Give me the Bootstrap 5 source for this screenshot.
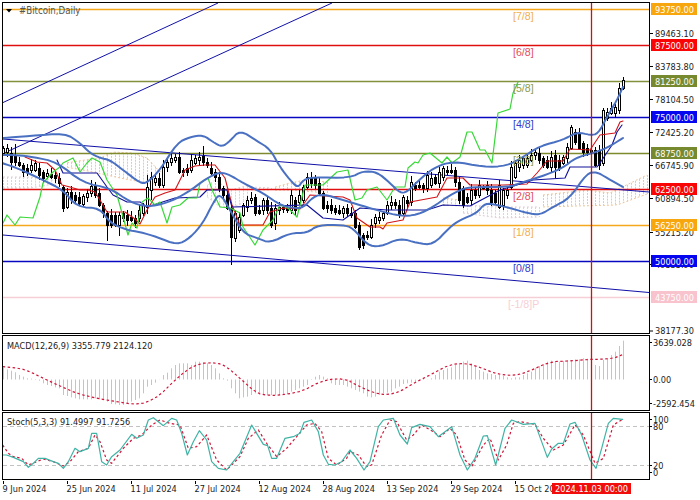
<!doctype html>
<html lang="en">
<head>
<meta charset="utf-8">
<title>#Bitcoin, Daily</title>
<link rel="stylesheet" href="https://cdn.jsdelivr.net/npm/bootstrap@5.3.0/dist/css/bootstrap.min.css">
<style>
html,body{margin:0;background:#fff;width:700px;height:500px;overflow:hidden}
.term-shell{padding:2px 0 0 2px;width:700px;height:500px;gap:1px}
.term-plot{width:648px;border:1px solid #000;background:#fff;flex:none;overflow:hidden}
.term-axis{width:50px;flex:none}
.h-main{height:332px}.h-macd{height:76px}.h-stoch{height:68px}
.term-plot svg,.term-axis svg,.term-dates svg{display:block}
.term-axis svg{overflow:visible}
.term-dates{height:19px}
svg text{font-family:"DejaVu Sans Condensed","Liberation Sans",sans-serif;font-size:9.1px;fill:#1a1a1a}
svg text.lvl{font-family:"Liberation Sans",sans-serif;font-size:10.6px}
svg text.ttl{fill:#555;font-size:9.6px}
svg text.onbox{fill:#fff;font-size:9.1px}
</style>
</head>
<body>
<div class="term-shell d-flex flex-column">
  <div class="d-flex h-main">
    <div class="term-plot"><svg id="p1" width="646" height="330" viewBox="3 3 646 330"></svg></div>
    <div class="term-axis"><svg id="a1" width="50" height="332" viewBox="650 2 50 332"></svg></div>
  </div>
  <div class="d-flex h-macd">
    <div class="term-plot"><svg id="p2" width="646" height="74" viewBox="3 336 646 74"></svg></div>
    <div class="term-axis"><svg id="a2" width="50" height="76" viewBox="650 335 50 76"></svg></div>
  </div>
  <div class="d-flex h-stoch">
    <div class="term-plot"><svg id="p3" width="646" height="66" viewBox="3 413 646 66"></svg></div>
    <div class="term-axis"><svg id="a3" width="50" height="68" viewBox="650 412 50 68"></svg></div>
  </div>
  <div class="term-dates"><svg id="dx" width="698" height="19" viewBox="2 481 698 19"></svg></div>
</div>
<script src="https://cdn.jsdelivr.net/npm/bootstrap@5.3.0/dist/js/bootstrap.bundle.min.js"></script>
<script>
const NS='http://www.w3.org/2000/svg';
function el(svg,tag,attrs,txt){const e=document.createElementNS(NS,tag);for(const k in attrs)e.setAttribute(k,attrs[k]);if(txt!=null)e.textContent=txt;document.getElementById(svg).appendChild(e);return e;}
function chaikin(p,n){for(let k=0;k<n;k++){const q=[p[0]];for(let i=0;i<p.length-1;i++){const a=p[i],b=p[i+1];q.push([a[0]*.75+b[0]*.25,a[1]*.75+b[1]*.25],[a[0]*.25+b[0]*.75,a[1]*.25+b[1]*.75]);}q.push(p[p.length-1]);p=q;}return p;}
function poly(svg,pts,color,w,dash){const a={points:pts.map(p=>p[0].toFixed(2)+','+p[1].toFixed(2)).join(' '),fill:'none',stroke:color,'stroke-width':w,'stroke-linejoin':'round','stroke-linecap':dash?'butt':'round'};if(dash)a['stroke-dasharray']=dash;el(svg,'polyline',a);}
function hl(svg,x1,x2,y,c,w,d){const a={x1,x2,y1:y,y2:y,stroke:c,'stroke-width':w||1};if(d)a['stroke-dasharray']=d;el(svg,'line',a);}
function vl(svg,x,y1,y2,c,w,d){const a={x1:x,x2:x,y1,y2,stroke:c,'stroke-width':w||1};if(d)a['stroke-dasharray']=d;el(svg,'line',a);}
function interp(p,x){if(x<=p[0][0])return p[0][1];for(let i=1;i<p.length;i++){if(x<=p[i][0]){const t=(x-p[i-1][0])/(p[i][0]-p[i-1][0]);return p[i-1][1]+t*(p[i][1]-p[i-1][1]);}}return p[p.length-1][1];}

/* ichimoku cloud */
const ORG='#eec7a0',PNK='#e2d0d4';
const clouds=[
 [PNK,3,60,[[3,177],[30,177],[60,181]],[[3,188],[30,188],[60,183]]],
 [ORG,66,163,[[66,163],[85,160],[100,158],[113,152],[133,153],[147,158],[160,172]],[[66,167],[93,172],[120,178],[147,183],[163,185]]],
 [PNK,205,250,[[205,187],[215,180],[230,190],[250,185]],[[205,195],[220,207],[240,205],[250,195]]],
 [PNK,250,272,[[250,187],[272,188]],[[250,190],[272,190]]],
 [ORG,272,328,[[272,188],[290,183],[305,180],[327,182]],[[272,190],[290,190],[327,193]]],
 [ORG,443,462,[[443,198],[460,200]],[[443,205],[460,206]]],
 [PNK,463,540,[[463,205],[500,207],[540,207]],[[463,213],[500,218],[540,217]]],
 [ORG,540,647,[[543,195],[587,190],[610,193],[647,175]],[[540,207],[577,206],[617,205],[647,194]]]
];
clouds.forEach(c=>{const xs=[];for(let x=3;x<=c[2];x+=4){if(x<c[1])continue;xs.push(x);vl('p1',x+.5,interp(c[3],x),interp(c[4],x),c[0],1,'2 1');}
 poly('p1',xs.map(x=>[x,interp(c[3],x)]),c[0],1,'2 2');poly('p1',xs.map(x=>[x,interp(c[4],x)]),c[0],1,'2 2');});

/* murrey levels */
const LV=[[9,'#f5a81c','93750.00','#f7a60e','[7/8]'],[45,'#e01010','87500.00','#fa0505','[6/8]'],[81,'#84913c','81250.00','#76892f','[5/8]'],[117,'#0808c0','75000.00','#0505f0','[4/8]'],[153,'#7e8a2c','68750.00','#76892f','[3/8]'],[189,'#e01010','62500.00','#fa0505','[2/8]'],[225,'#f5a81c','56250.00','#f7a60e','[1/8]'],[261,'#0808c0','50000.00','#0505f0','[0/8]'],[297,'#f6cfd6','43750.00','#f8c3cd','[-1/8]P']];
const lvlCol={'[7/8]':'#f0b050','[6/8]':'#e0505a','[5/8]':'#8c9a50','[4/8]':'#3040c8','[3/8]':'#8c9a50','[2/8]':'#e0505a','[1/8]':'#f0b050','[0/8]':'#3040c8','[-1/8]P':'#f6cfd6'};
LV.forEach(l=>{hl('p1',3,649,l[0]+.5,l[1],1.3);});

/* channels */
[[2,103,218,3],[2,154,332,3],[3,139,649,192],[3,235,649,292.5]].forEach(s=>el('p1','line',{x1:s[0],y1:s[1],x2:s[2],y2:s[3],stroke:'#1010a8','stroke-width':1}));

/* candles: x top bottom black */
const CD="3 148 153 0,7 148 152 0,11 153 162 1,15 155 162 1,19 162 165 1,23 165 172 1,27 168 172 1,31 165 170 0,35 163 170 0,39 168 175 1,43 172 178 1,47 173 176 0,51 174 177 1,55 175 178 1,59 178 183 1,63 187 208 1,67 192 207 0,71 192 199 1,75 195 200 1,79 197 203 1,83 196 204 0,87 193 197 0,91 186 193 0,95 185 195 1,99 193 205 1,103 205 213 1,107 213 225 1,111 215 225 1,115 215 225 1,119 215 225 0,123 213 218 1,127 215 220 1,131 217 220 1,135 218 223 1,139 210 218 0,143 205 213 0,147 187 207 0,151 177 190 0,155 178 182 0,159 178 185 1,163 167 185 0,167 162 167 0,171 158 162 0,175 157 160 0,179 157 172 1,183 170 172 1,187 168 172 1,191 160 170 0,195 158 163 0,199 157 160 0,203 156 162 1,207 162 165 1,211 168 173 1,215 172 177 1,219 177 188 1,223 188 195 1,227 195 208 1,231 208 237 1,235 213 238 0,239 217 230 0,243 205 215 0,247 200 207 0,251 198 200 0,255 197 213 1,259 210 213 1,263 200 210 0,267 200 210 1,271 208 225 1,275 208 223 0,279 207 210 0,283 207 209 1,287 208 210 1,291 195 210 0,295 200 210 1,299 195 202 0,303 187 200 0,307 177 187 0,311 178 183 1,315 178 185 1,319 183 193 1,323 193 208 1,327 205 208 1,331 205 210 1,335 208 212 1,339 210 213 1,343 208 213 0,347 208 213 1,351 213 215 1,355 213 227 1,359 225 247 1,363 235 245 1,367 235 237 1,371 225 237 0,375 217 223 0,379 217 220 0,383 213 218 0,387 205 213 0,391 202 205 0,395 202 205 1,399 205 215 1,403 197 213 0,407 200 203 1,411 182 202 0,415 185 188 1,419 185 187 1,423 185 188 1,427 175 188 0,431 178 185 0,435 177 183 1,439 172 183 0,443 168 177 0,447 170 172 1,451 170 172 1,455 170 182 1,459 182 200 1,463 188 205 1,467 197 202 1,471 190 200 0,475 190 195 1,479 185 195 0,483 187 188 1,487 185 190 1,491 190 202 1,495 193 202 1,499 185 207 0,503 190 205 0,507 190 195 0,511 167 187 0,515 163 177 0,519 160 167 0,523 158 165 0,527 158 165 0,531 155 160 0,535 152 155 0,539 153 160 1,543 158 165 1,547 160 167 1,551 157 167 0,555 155 167 1,559 160 168 1,563 157 163 0,567 147 158 0,571 127 148 0,575 132 142 1,579 133 148 1,583 143 152 1,587 148 152 1,591 150 152 1,595 150 165 1,599 150 165 1,603 110 163 0,607 112 118 0,611 108 113 0,615 107 113 0,619 88 110 0,623 80 88 0";
const WK={107:[211,241],231:[205,265],119:[212,236],359:[222,250],203:[146,166],571:[125,150],623:[77,90],15:[144,166],11:[147,170],147:[175,214],151:[172,200],163:[160,188],603:[108,166],555:[150,178],291:[190,214],275:[204,230],127:[210,226],63:[185,212]};
CD.split(',').forEach((s,i)=>{const [x,t,b,k]=s.split(' ').map(Number);const w=WK[x]||[t-2-(i*7%5),b+2+(i*3%4)];
 vl('p1',x+.5,w[0],w[1],'#000',1);
 el('p1','rect',{x:x-.5,y:t+.5,width:2,height:Math.max(b-t,1),fill:k?'#000':'#fff',stroke:'#000','stroke-width':1});});

/* tenkan, kijun, chikou */
poly('p1',[[25,157],[37,162],[47,163],[55,170],[62,185],[70,187],[80,190],[88,190],[95,192],[100,200],[107,212],[113,212],[125,212],[135,219],[140,224],[147,210],[155,197],[165,193],[175,190],[185,170],[195,166],[205,165],[215,165],[225,178],[232,205],[240,225],[253,225],[263,225],[270,212],[283,208],[300,209],[310,195],[343,197],[350,200],[357,218],[370,227],[380,227],[383,229],[387,223],[403,220],[410,202],[437,197],[447,178],[463,178],[470,185],[503,185],[527,184],[537,173],[547,161],[563,161],[570,149],[590,150],[600,135],[615,133],[620,122],[623,121]],'#d01418',1.1);
poly('p1',[[57,160],[63,173],[97,173],[107,187],[113,195],[127,202],[140,202],[147,207],[175,198],[200,197],[207,190],[227,190],[232,207],[307,205],[323,218],[343,220],[360,208],[387,210],[427,210],[443,205],[470,206],[500,190],[533,180],[565,178],[570,167],[597,167],[600,163],[612,145],[617,132],[622,125]],'#10109a',1.1);
poly('p1',[[3,223],[7,215],[15,225],[20,217],[33,218],[40,197],[43,183],[53,172],[60,167],[63,163],[73,158],[80,172],[87,163],[92,158],[100,162],[107,180],[117,195],[122,213],[128,235],[132,223],[137,228],[142,202],[148,198],[155,205],[160,202],[167,223],[172,207],[180,205],[188,198],[197,198],[200,183],[208,178],[213,192],[220,207],[230,208],[240,213],[243,227],[255,245],[263,230],[273,220],[280,205],[288,208],[297,217],[305,185],[323,185],[337,172],[348,170],[355,200],[362,198],[367,190],[377,187],[387,200],[395,187],[405,187],[408,168],[415,162],[418,163],[423,155],[430,153],[442,163],[447,157],[452,163],[460,157],[467,132],[472,132],[480,150],[485,150],[492,163],[498,113],[510,109],[513,93],[518,82]],'#38d838',1.2);

/* bollinger */
const BL='#4a70c2';
poly('p1',chaikin([[2,138],[30,136],[65,133],[80,143],[90,153],[100,158],[110,160],[123,170],[140,183],[147,183],[160,170],[177,143],[190,137],[203,135],[213,142],[222,147],[230,141],[240,130],[257,141],[270,149],[280,167],[290,180],[298,188],[303,180],[313,177],[350,178],[363,171],[377,172],[390,183],[400,193],[407,192],[417,182],[433,168],[453,161],[483,167],[507,166],[523,157],[540,146],[563,140],[577,132],[590,135],[598,134],[607,117],[617,100],[623,87]],2),BL,2);
poly('p1',chaikin([[2,155],[17,155],[33,157],[57,162],[83,183],[110,188],[130,202],[147,207],[167,203],[187,193],[207,178],[220,172],[230,175],[243,183],[263,193],[280,205],[293,208],[303,208],[313,197],[323,194],[343,200],[363,206],[380,211],[400,216],[417,215],[433,207],[447,197],[460,190],[470,187],[510,187],[520,183],[540,177],[563,168],[575,158],[593,153],[607,148],[623,138]],2),BL,2);
poly('p1',chaikin([[2,163],[17,168],[43,180],[63,190],[77,207],[100,208],[110,223],[127,230],[140,232],[157,237],[177,245],[190,238],[203,223],[213,203],[220,193],[230,210],[243,233],[257,238],[270,243],[290,233],[307,233],[318,225],[343,225],[353,228],[367,245],[380,247],[400,238],[417,243],[433,245],[450,227],[460,220],[477,213],[485,203],[497,205],[510,208],[527,213],[540,215],[553,207],[570,198],[587,173],[597,172],[607,178],[623,187]],2),BL,2);

/* level captions, crosshair */
LV.forEach(l=>{const t=l[4];el('p1','text',{class:'lvl',x:t.length>5?508:513,y:l[0]+11,style:'fill:'+lvlCol[t]},t);});
vl('p1',591.5,3,333,'#d01010',1.3);
el('p1','polygon',{points:'6,9 12,9 9,12.5',fill:'#000'});
el('p1','text',{class:'ttl',x:19,y:14},'#Bitcoin,Daily');

/* price axis */
[[33,'89463.10'],[66,'83783.80'],[99,'78104.50'],[132,'72425.20'],[165,'66745.90'],[198,'60894.50'],[232,'55215.20'],[264,'49535.90'],[330.5,'38177.30']].forEach(t=>{hl('a1',650,653,t[0]+.5,'#000',1);el('a1','text',{x:655,y:t[0]+3.5},t[1]);});
LV.forEach(l=>{el('a1','rect',{x:651,y:l[0]-6,width:46,height:12,fill:l[3]});el('a1','text',{class:'onbox',x:655,y:l[0]+3.5},l[2]);});

/* macd */
const M=[[3,322],[7,328],[11,332],[15,337],[19,345],[23,350],[27,355],[31,356],[35,357],[39,362],[43,370],[47,375],[51,378],[55,382],[59,385],[63,405],[67,408],[71,412],[75,415],[79,418],[83,418],[87,418],[91,418],[95,415],[99,418],[103,420],[107,425],[111,432],[115,433],[119,435],[123,435],[127,430],[131,425],[135,420],[139,415],[143,400],[147,380],[151,375],[155,368],[159,358],[163,345],[167,338],[171,325],[175,315],[179,310],[183,310],[187,310],[191,315],[195,305],[199,305],[203,307],[207,310],[211,315],[215,325],[219,340],[223,355],[227,362],[231,385],[235,400],[239,415],[243,412],[247,410],[251,405],[255,400],[259,400],[263,403],[267,405],[271,405],[275,405],[279,405],[283,405],[287,402],[291,395],[295,390],[299,385],[303,380],[307,375],[311,360],[315,350],[319,345],[323,350],[327,355],[331,370],[335,375],[339,375],[343,375],[347,380],[351,385],[355,390],[359,395],[363,400],[367,410],[371,412],[375,410],[379,405],[383,400],[387,398],[391,395],[395,385],[399,380],[403,372],[407,370],[411,368],[415,365],[419,362],[423,360],[427,358],[431,355],[435,345],[439,335],[443,330],[447,325],[451,322],[455,315],[459,310],[463,305],[467,302],[471,310],[475,320],[479,330],[483,335],[487,340],[491,342],[495,345],[499,345],[503,348],[507,352],[511,355],[515,352],[519,352],[523,345],[527,340],[531,335],[535,325],[539,318],[543,312],[547,305],[551,302],[555,303],[559,305],[563,303],[567,300],[571,300],[575,298],[579,298],[583,295],[587,296],[591,297],[595,315],[599,318],[603,300],[607,295],[611,285],[615,275],[619,258],[623,242]];
M.forEach(p=>vl('p2',p[0]+.5,379.5,260+p[1]/3,'#c4c4c4',1));
const toA=(arr,ox,oy)=>arr.map(p=>[ox+p[0]/3,oy+p[1]/3]);
poly('p2',chaikin(toA([[8,320],[60,325],[90,335],[130,355],[180,378],[230,400],[290,415],[350,425],[400,433],[440,428],[480,405],[520,365],[560,330],[600,310],[650,308],[680,320],[720,355],[770,400],[810,407],[860,403],[910,392],[960,365],[1010,355],[1050,362]],0,260).concat(toA([[0,365],[30,380],[70,398],[110,405],[150,395],[190,370],[240,345],[300,313],[350,310],[390,322],[440,342],[490,347],[530,337],[600,305],[660,303],[720,298],[750,298],[790,295],[820,283]],350,260)),1),'#d01437',1.2,'2.5 2.5');
vl('p2',591.5,336,410,'#d01010',1.3);
el('p2','text',{x:7,y:348.5},'MACD(12,26,9) 3355.779 2124.120');
[[342.5,'3639.028'],[379.5,'0.00'],[403.5,'-2592.454']].forEach(t=>{hl('a2',650,652,t[0],'#000',1);el('a2','text',{x:653,y:t[0]+3.5},t[1]);});

/* stochastic */
hl('p3',3,649,426.5,'#c2c2c2',1,'4 3');hl('p3',3,649,465.5,'#c2c2c2',1,'4 3');
poly('p3',toA([[8,120],[25,145],[40,155],[65,160],[85,180],[110,170],[130,162],[160,170],[190,183],[210,170],[235,140],[265,130],[285,90],[300,110],[320,165],[335,175],[370,130],[400,100],[425,90],[455,60],[480,45],[510,55],[540,60],[565,130],[590,125],[620,90],[650,165],[680,195],[720,155],[745,100],[775,75],[800,115],[830,155],[860,130],[890,95],[920,60],[945,55],[965,80],[985,160],[1010,180],[1040,160]],0,405).concat(toA([[0,140],[25,150],[50,185],[65,180],[95,90],[120,45],[140,50],[170,105],[190,90],[215,60],[250,80],[270,95],[300,70],[320,90],[345,165],[365,185],[400,120],[420,100],[445,165],[470,120],[490,55],[510,50],[555,58],[580,100],[610,135],[640,120],[675,60],[700,90],[735,175],[760,160],[790,60],[818,43]],350,405)),'#d01437',1.2,'2.5 2.5');
poly('p3',toA([[8,150],[20,150],[40,157],[70,170],[85,187],[100,175],[115,160],[135,160],[160,170],[175,175],[190,190],[205,170],[225,130],[240,140],[265,130],[275,85],[290,85],[305,170],[320,180],[335,155],[360,135],[395,88],[410,100],[430,90],[445,45],[460,38],[475,50],[490,62],[515,40],[530,45],[545,85],[562,150],[580,110],[598,77],[620,105],[635,170],[655,190],[680,195],[700,170],[720,145],[755,60],[770,85],[790,118],[803,122],[815,160],[830,160],[855,100],[880,95],[900,85],[912,52],[935,45],[955,80],[970,150],[985,178],[1005,180],[1025,170],[1050,135]],0,405).concat(toA([[20,160],[42,195],[60,170],[85,65],[100,45],[130,40],[150,90],[172,117],[185,68],[210,58],[240,65],[265,95],[305,65],[330,150],[352,195],[375,160],[400,93],[412,92],[437,180],[465,70],[485,45],[520,58],[555,55],[592,157],[605,132],[625,115],[640,115],[660,57],[675,52],[695,90],[720,165],[738,190],[755,130],[775,55],[790,40],[818,43]],350,405)),'#3fb3a6',1.2);
vl('p3',591.5,413,479,'#d01010',1.3);
el('p3','text',{x:7,y:424.5},'Stoch(5,3,3) 91.4997 91.7256');
[[419.5,'100'],[426.5,'80'],[465.5,'20'],[472.5,'0']].forEach(t=>{hl('a3',650,652,t[0],'#000',1);el('a3','text',{x:653,y:t[0]+3.5},t[1]);});

/* date axis */
[[3,'9 Jun 2024'],[67,'25 Jun 2024'],[131,'11 Jul 2024'],[195,'27 Jul 2024'],[259,'12 Aug 2024'],[323,'28 Aug 2024'],[387,'13 Sep 2024'],[451,'29 Sep 2024'],[515,'15 Oct 2024']].forEach(t=>{vl('dx',t[0]+.5,481,484,'#000',1);el('dx','text',{x:t[0]-.5,y:492},t[1]);});
el('dx','rect',{x:552,y:483,width:79,height:11,fill:'#f20d0d'});
el('dx','text',{class:'onbox',x:555,y:492},'2024.11.03 00:00');
</script>
</body>
</html>
